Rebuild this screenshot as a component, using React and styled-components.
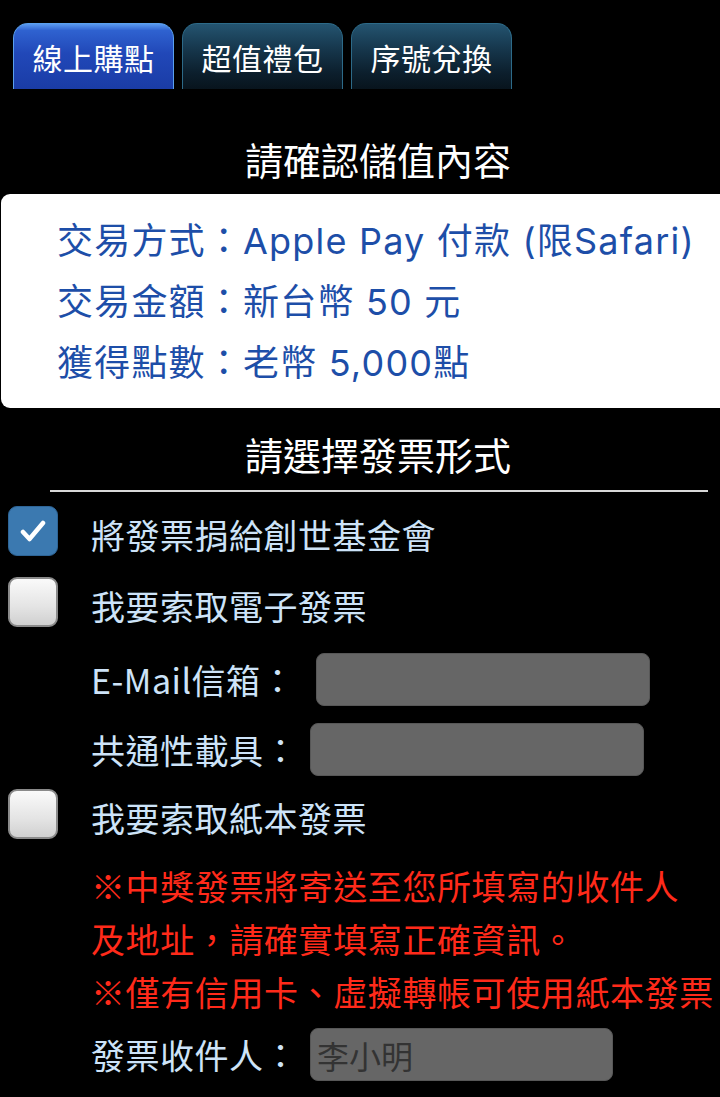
import React from "react";
import styled, { createGlobalStyle, css } from "styled-components";

const GlobalStyle = createGlobalStyle`
  body {
    margin: 0;
    background: #000;
    font-family: "Noto Sans CJK TC", "Noto Sans", sans-serif;
    overflow-x: hidden;
  }
`;

const tabs = [
  { label: "線上購點", active: true },
  { label: "超值禮包" },
  { label: "序號兌換" },
];

const summary = [
  { label: "交易方式", value: "Apple Pay 付款 (限Safari)" },
  { label: "交易金額", value: "新台幣 50 元" },
  { label: "獲得點數", value: "老幣 5,000點" },
];

const App = () => {
  return (
    <Page>
      <GlobalStyle />
      <TabBar>
        {tabs.map((t) => (
          <Tab key={t.label} $active={t.active}>
            {t.label}
          </Tab>
        ))}
      </TabBar>

      <Heading $top={45}>請確認儲值內容</Heading>
      <SummaryCard>
        {summary.map((row) => (
          <SummaryLine key={row.label}>
            {row.label}：{row.value}
          </SummaryLine>
        ))}
      </SummaryCard>

      <Heading $top={21}>請選擇發票形式</Heading>
      <Divider />

      <OptionRow $top={3}>
        <CheckBox $checked>
          <svg width="26" height="24" viewBox="0 0 26 24">
            <path
              d="M3 13 L9.5 20 L23 4"
              fill="none"
              stroke="#fff"
              strokeWidth="4.5"
              strokeLinecap="round"
              strokeLinejoin="round"
            />
          </svg>
        </CheckBox>
        <OptionText>將發票捐給創世基金會</OptionText>
      </OptionRow>

      <OptionRow>
        <CheckBox />
        <OptionText>我要索取電子發票</OptionText>
      </OptionRow>

      <FieldRow $top={16} $gap={21}>
        <FieldLabel>E-Mail信箱：</FieldLabel>
        <Input $width={334} />
      </FieldRow>
      <FieldRow $top={17}>
        <FieldLabel>共通性載具：</FieldLabel>
        <Input $width={334} />
      </FieldRow>

      <OptionRow $top={2}>
        <CheckBox />
        <OptionText>我要索取紙本發票</OptionText>
      </OptionRow>

      <Notice>
        ※中獎發票將寄送至您所填寫的收件人
        <br />
        及地址，請確實填寫正確資訊。
        <br />
        ※僅有信用卡、虛擬轉帳可使用紙本發票
      </Notice>

      <FieldRow $top={10}>
        <FieldLabel>發票收件人：</FieldLabel>
        <Input $width={303} placeholder="李小明" />
      </FieldRow>
    </Page>
  );
};

const Page = styled.div`
  width: 720px;
  min-height: 1097px;
  background: #000;
  overflow: hidden;
`;

const TabBar = styled.div`
  display: flex;
  gap: 8px;
  padding: 23px 0 0 13px;
`;

const Tab = styled.div`
  width: 161px;
  height: 66px;
  box-sizing: border-box;
  display: flex;
  align-items: center;
  justify-content: center;
  border-radius: 15px 15px 0 0;
  color: #fff;
  font-size: 30px;
  letter-spacing: 0.5px;
  border: 1px solid #2d6a88;
  border-bottom: none;
  background: linear-gradient(
    to bottom,
    #245470 0%,
    #17394f 35%,
    #0c1f2d 75%,
    #08141d 100%
  );

  ${({ $active }) =>
    $active &&
    css`
      border-color: #5aa0ee;
      background: linear-gradient(
        to bottom,
        #5a9af0 0%,
        #2f62d0 10%,
        #2148b8 45%,
        #1a3ca6 100%
      );
    `}
`;

const Heading = styled.div`
  margin-top: ${({ $top }) => $top}px;
  text-align: center;
  color: #fff;
  font-size: 38px;
  line-height: 50px;
  padding-left: 36px;
`;

const SummaryCard = styled.div`
  margin: 10px -12px 0 1px;
  background: #fff;
  border-radius: 9px;
  padding: 17px 0 14px 56px;
`;

const SummaryLine = styled.div`
  color: #1d4ea8;
  font-family: "Inter", "Noto Sans CJK TC", sans-serif;
  font-size: 36px;
  letter-spacing: 1.2px;
  line-height: 61px;
  white-space: nowrap;
`;

const Divider = styled.div`
  margin: 11px 12px 0 50px;
  height: 2px;
  background: #d8d8d8;
`;

const OptionRow = styled.div`
  display: flex;
  align-items: center;
  gap: 33px;
  height: 71px;
  margin-top: ${({ $top = 0 }) => $top}px;
  padding-left: 8px;
`;

const CheckBox = styled.div`
  width: 50px;
  height: 50px;
  box-sizing: border-box;
  border-radius: 9px;
  display: flex;
  align-items: center;
  justify-content: center;
  border: 2px solid #8a8a8a;
  background: linear-gradient(to bottom, #fafafa, #e4e4e4 60%, #d0d0d0);

  ${({ $checked }) =>
    $checked &&
    css`
      border: 1px solid #2e6597;
      background: #3b79b0;
    `}
`;

const OptionText = styled.div`
  color: #cde3f8;
  font-size: 34px;
  letter-spacing: 0.5px;
  padding-top: 9px;
  line-height: 40px;
`;

const FieldRow = styled.div`
  display: flex;
  align-items: center;
  gap: ${({ $gap = 12 }) => $gap}px;
  margin-top: ${({ $top = 0 }) => $top}px;
  padding-left: 91px;
`;

const FieldLabel = styled.div`
  color: #cde3f8;
  font-size: 34px;
  letter-spacing: 0.5px;
  white-space: nowrap;
`;

const Input = styled.input`
  width: ${({ $width }) => $width}px;
  height: 53px;
  box-sizing: border-box;
  border: 1px solid #575757;
  border-radius: 8px;
  background: #666;
  padding: 0 6px;
  font-family: "Noto Sans CJK TC", sans-serif;
  font-size: 32px;
  color: #333;
  outline: none;

  &::placeholder {
    color: #333;
  }
`;

const Notice = styled.div`
  margin-top: 10px;
  padding-left: 91px;
  color: #ff2a1a;
  font-size: 34px;
  letter-spacing: 0.6px;
  line-height: 53px;
  white-space: nowrap;
`;

export default App;
